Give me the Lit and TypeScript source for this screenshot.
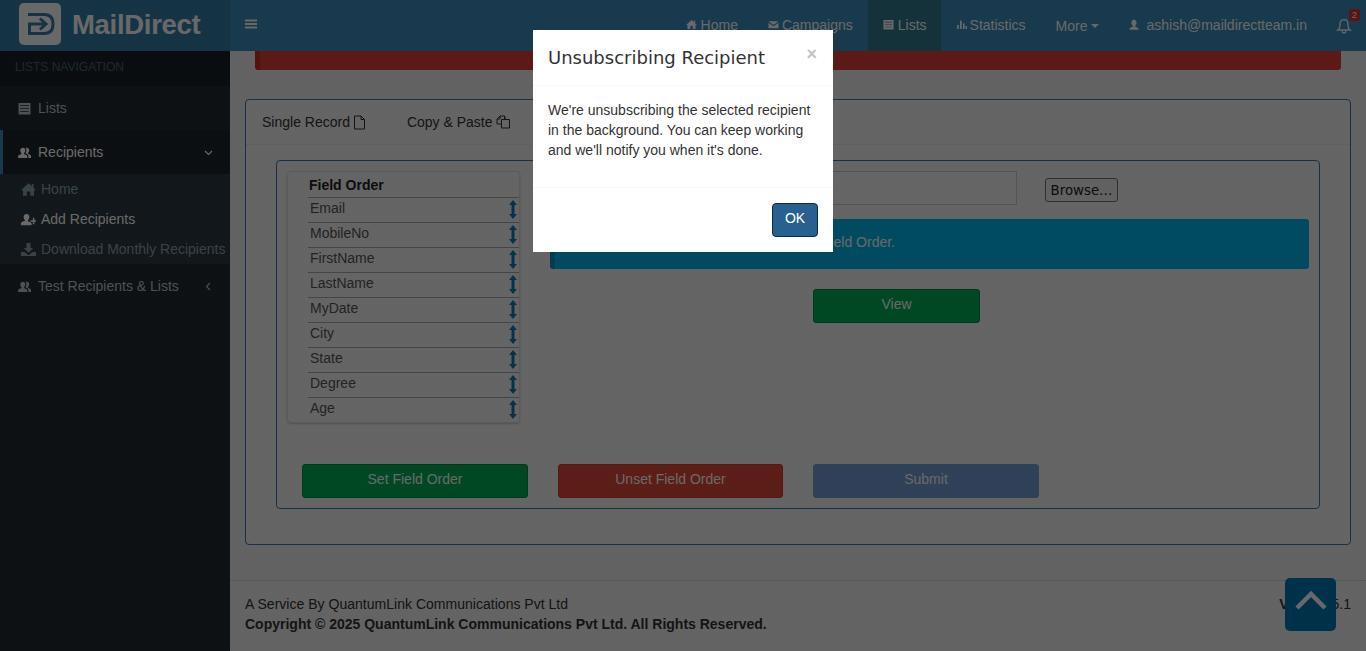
import { LitElement, html, css, svg } from "lit";
import { customElement } from "lit/decorators.js";

const gi = (d: any, size = 12) => html`<svg class="gi" width=${size} height=${size} viewBox="0 0 12 12" fill="currentColor">${d}</svg>`;
const I = {
  home: svg`<path d="M6 1 0 6.500h1.600V11h3V7.500h2.800V11h3V6.500H12L10 4.600V1.600H8.600v1.700z"/>`,
  list: svg`<path fill-rule="evenodd" d="M.5 1h11v10.500H.5zM2 3v.7h8V3zm0 2.700v.7h8V5.700zm0 2.700v.7h8V8.400z"/>`,
  mail: svg`<path d="M.5 2.500h11L6 6.500zM.5 4v6h11V4L6 8z"/>`,
  stats: svg`<path d="M1 6.500h2V11H1zM4.300 2h2v9h-2zM7.600 5h1.800v6H7.600zM10.300 7.500H12V11h-1.700z"/>`,
  user: svg`<path d="M6 .8c1.700 0 2.600 1.200 2.600 2.900 0 1.300-.6 2.500-1.400 3v1.100c1.600.5 3.300 1 3.300 2.200v.8h-9v-.8c0-1.200 1.700-1.700 3.300-2.200V6.700c-.8-.5-1.400-1.700-1.400-3C3.400 2 4.300.8 6 .8z"/>`,
  users: svg`<path d="M4.500 1.500c1.400 0 2.300 1 2.300 2.500 0 1.100-.5 2.100-1.200 2.500v1c1.400.4 3 .9 3 1.900V11H.1V9.400c0-1 1.600-1.500 3-1.900v-1C2.500 6.100 2.100 5.100 2.100 4c0-1.500 1-2.500 2.400-2.500zM8.200 1.500c1.300 0 2.100 1 2.100 2.400 0 1-.4 2-1 2.400v1.100c1.200.4 2.700.8 2.700 1.800V11H9.600V9.200c0-1.200-1.300-1.900-2.800-2.400.5-.7 1-1.600 1-3 0-.9-.3-1.600-.7-2.100.3-.1.700-.2 1.100-.2z"/>`,
  userAdd: svg`<path d="M4.400 1.500c1.400 0 2.300 1 2.300 2.500 0 1-.5 2-1.200 2.500v.9c1.500.4 3 .9 3 1.900v1.200H0V8.800c0-1 1.600-1.500 3.200-1.900V6.500C2.500 6 2.100 5 2.100 4c0-1.500.9-2.500 2.300-2.500zM9.500 4.500h1.200v2H12.600v1.200h-1.900v2H9.500v-2H7.600V6.500h1.900z"/>`,
  down: svg`<path d="M4.400.8h3.200v4h2.200L6 8.600 2.200 4.800h2.200zM0 8h2.800L6 10.600 9.200 8H12v3.200H0z"/>`,
  bell: svg`<path fill="none" stroke="currentColor" d="M6 1.200c2 0 3 1.500 3 3.400 0 2.200.4 3.600 1.600 4.400H1.400C2.600 8.200 3 6.800 3 4.600 3 2.700 4 1.200 6 1.200zM4.500 9.800c.2 1 .8 1.500 1.500 1.500s1.300-.5 1.500-1.500"/>`,
};

const fields = ["Email", "MobileNo", "FirstName", "LastName", "MyDate", "City", "State", "Degree", "Age"];

@customElement("app-root")
export class AppRoot extends LitElement {
  static styles = css`
    :host { display: block; width: 1366px; height: 651px; overflow: hidden; position: relative; font: 14px/20px "Liberation Sans", Arial, sans-serif; color: #333; background: #f0f0f0; }
    * { box-sizing: border-box; }
    .gi { display: inline-block; flex: none; }
    .top { display: flex; height: 51px; background: #3c8dbc; }
    .logo { width: 230px; background: #367fa9; display: flex; align-items: flex-start; padding: 3px 0 0 19px; gap: 11px; }
    .logo svg { flex: none; }
    .logo span { font: bold 27.5px/44px "Liberation Sans", sans-serif; color: #fff; letter-spacing: -0.3px; }
    .bars { margin: 18px 0 0 15px; width: 12px; height: 12px; color: #fff; }
    .nav { margin-left: auto; display: flex; height: 51px; color: #fff; }
    .nav a { display: flex; align-items: center; gap: 4px; height: 51px; padding: 0 15px 2px; }
    .nav a.camp { gap: 3px; }
    .nav a.on { background: #337a90; padding-right: 14px; }
    .nav a.stat { gap: 3px; }
    .nav a.more { padding: 0 15px 0; gap: 0; }
    .nav .gi { width: 11px; height: 11px; }
    .caret { display: inline-block; border: 4px solid transparent; border-top-color: #fff; border-bottom: 0; margin-left: 3px; }
    .nav a.mail { gap: 7px; padding: 0 15px 2px 14px; }
    .nav a.mail .gi { width: 12px; height: 12px; }
    .nav a.bell { position: relative; padding: 0 14px 0 14px; }
    .nav a.bell .gi { width: 16px; height: 16px; }
    .badge { position: absolute; right: 6px; top: 9px; background: #d9332b; color: #fff; font-size: 9px; line-height: 12px; height: 12px; padding: 0 3px; border-radius: 3px; }
    .rest { display: flex; height: 600px; }
    .side { width: 230px; flex: none; background: #222d32; color: #b8c7ce; }
    .shead { height: 35px; background: #1a2226; font-size: 12px; line-height: 32px; color: #4b646f; padding-left: 15px; }
    .item { height: 44px; display: flex; align-items: center; padding: 0 15px 0 18px; gap: 7px; }
    .item.on { background: #1e282c; color: #fff; border-left: 3px solid #3c8dbc; padding-left: 15px; }
    .item .chev { margin-left: auto; margin-right: 2px; }
    .item .gi { width: 13px; height: 13px; }
    .sub { background: #2c3b41; height: 90px; color: #8aa4af; }
    .sub div { height: 30px; display: flex; align-items: center; padding-left: 21px; gap: 5px; white-space: nowrap; }
    .sub div.on { color: #fff; }
    .sub .gi { width: 15px; height: 15px; }
    .main { flex: 1; display: flex; flex-direction: column; min-width: 0; }
    .redbar { height: 19px; margin: 0 25px; background: #e1423a; border-left: 5px solid #c23321; border-radius: 0 0 3px 3px; }
    .panel { margin: 29px 15px 0; height: 446px; border: 1px solid #337ab7; border-radius: 4px; background: #f5f5f5; }
    .tabs { height: 45px; border-bottom: 1px dotted #ddd; display: flex; align-items: flex-start; padding: 12px 0 0 16px; gap: 41px; }
    .tabs span { display: flex; align-items: center; gap: 3px; }
    .inner { margin: 15px 30px 0; height: 349px; border: 1px solid #337ab7; border-radius: 4px; padding: 10px 10px 0; }
    .cols { display: flex; height: 253px; }
    .fo { width: 233px; height: 252px; flex: none; border: 1px solid #ddd; border-radius: 4px; box-shadow: 0 1px 2px rgba(0,0,0,.2); padding-left: 20px; }
    .fo .h { height: 25px; font-weight: bold; padding: 3px 0 0 1px; color: #222; }
    .fo .r { height: 25px; border-top: 1px solid #aaa; display: flex; justify-content: space-between; padding: 0 2px; color: #555; }
    .fo .r svg { margin-top: 2px; color: #1a78b5; }
    .right { flex: 1; padding-left: 28px; }
    .filerow { display: flex; align-items: flex-start; height: 48px; }
    .file { width: 469px; height: 34px; border: 1px solid #ccc; background: #f7f7f7; flex: none; }
    .browse { margin: 7px 0 0 28px; width: 73px; height: 24px; border: 1px solid #767676; border-radius: 3px; background: #efefef; color: #222; font: 13.33px/23px "DejaVu Sans", sans-serif; text-align: center; }
    .alert { margin-left: 2px; width: 759px; height: 50px; background: #00b8ec; border-left: 5px solid #0097c4; border-radius: 3px; text-align: right; color: #fff; line-height: 46px; padding-right: 414px; white-space: nowrap; }
    .viewrow { display: flex; margin: 20px 0 0 265px; }
    .btn { height: 34px; border-radius: 3px; color: #fff; text-align: center; line-height: 29px; }
    .green { background: #00b05a; border: 1px solid #008d4c; }
    .red { background: #dd4b39; border: 1px solid #d73925; }
    .blue { background: #6f9bd8; border: 1px solid #6f9bd8; opacity: .95; }
    .btns { display: flex; margin: 40px 0 0 15px; }
    .btns .btn:nth-child(1) { width: 226px; }
    .btns .btn:nth-child(2) { width: 225px; margin-left: 30px; }
    .btns .btn:nth-child(3) { width: 226px; margin-left: 30px; }
    .foot { margin-top: 35px; height: 71px; border-top: 1px solid #d2d6de; background: #f2f2f2; padding: 13px 15px 0; display: flex; justify-content: space-between; }
    .foot .svc { letter-spacing: .02px; }
    .foot b { color: #333; }
    .ver b { letter-spacing: -.3px; }
    .backdrop { position: absolute; inset: 0; background-color: rgba(0,0,0,.58); background-image: conic-gradient(rgba(0,0,0,.05) 25%, transparent 0 50%, rgba(0,0,0,.05) 0 75%, transparent 0); background-size: 2px 2px; }
    .top-btn { position: absolute; left: 1285px; top: 578px; width: 51px; height: 53px; background: #007bb6; border-radius: 5px; display: flex; justify-content: center; padding-top: 11px; }
    .modal { position: absolute; left: 533px; top: 30px; width: 300px; height: 222px; background: #fff; display: flex; flex-direction: column; }
    .mh { height: 56px; padding: 15px 15px 0; border-bottom: 1px dotted #f2f2f2; position: relative; }
    .mh h4 { margin: 0; font: 18px/25px "DejaVu Sans", sans-serif; color: #333; white-space: nowrap; font-weight: normal; }
    .x { position: absolute; right: 16px; top: 14px; font: bold 18px/20px "Liberation Sans", sans-serif; color: #c4c4c4; }
    .mb { height: 102px; padding: 14px 15px; border-bottom: 1px dotted #f2f2f2; }
    .mf { display: flex; justify-content: flex-end; padding: 15px; }
    .ok { width: 46px; height: 34px; background: #286090; border: 1px solid #122b40; border-radius: 4px; color: #fff; text-align: center; line-height: 28px; }
  `;

  render() {
    const arrow = html`<svg width="8" height="19" viewBox="0 0 8 19" fill="currentColor"><path d="M4 0 8 5H5.500V14H8L4 19 0 14H2.500V5H0z"/></svg>`;
    const chevD = html`<svg class="chev" width="9" height="9" viewBox="0 0 9 9" fill="none" stroke="currentColor" stroke-width="1.100"><path d="M1 3 4.500 6.500 8 3"/></svg>`;
    const chevL = html`<svg class="chev" width="9" height="9" viewBox="0 0 9 9" fill="none" stroke="currentColor" stroke-width="1.100"><path d="M6 1 2.500 4.500 6 8"/></svg>`;
    return html`
      <div class="top">
        <div class="logo">
          <svg width="42" height="42" viewBox="0 0 42 42">
            <rect width="42" height="42" rx="5" fill="#fff"/>
            <path d="M9 11.500H25Q34 11.500 34 21Q34 30.500 25 30.500H10.500V21H27M21 15.500 27 21 21 26.500" fill="none" stroke="#367fa9" stroke-width="3"/>
          </svg>
          <span>MailDirect</span>
        </div>
        <svg class="bars" viewBox="0 0 12 12" fill="currentColor"><path d="M0 1.500h12v2H0zM0 5h12v2H0zM0 8.500h12v2H0z"/></svg>
        <div class="nav">
          <a>${gi(I.home)}Home</a>
          <a class="camp">${gi(I.mail)}Campaigns</a>
          <a class="on">${gi(I.list)}Lists</a>
          <a class="stat">${gi(I.stats)}Statistics</a>
          <a class="more">More<i class="caret"></i></a>
          <a class="mail">${gi(I.user)}ashish@maildirectteam.in</a>
          <a class="bell">${gi(I.bell)}<span class="badge">2</span></a>
        </div>
      </div>
      <div class="rest">
        <aside class="side">
          <div class="shead">LISTS NAVIGATION</div>
          <div class="item">${gi(I.list)}<span>Lists</span></div>
          <div class="item on">${gi(I.users)}<span>Recipients</span>${chevD}</div>
          <div class="sub">
            <div>${gi(I.home)}Home</div>
            <div class="on">${gi(I.userAdd)}Add Recipients</div>
            <div>${gi(I.down)}Download Monthly Recipients</div>
          </div>
          <div class="item">${gi(I.users)}<span>Test Recipients &amp; Lists</span>${chevL}</div>
        </aside>
        <main class="main">
          <div class="redbar"></div>
          <section class="panel">
            <div class="tabs">
              <span>Single Record <svg width="13" height="15" viewBox="0 0 13 15" fill="none" stroke="currentColor"><path d="M1.500 1H8L11.500 4.500V14H1.500ZM8 1V4.500H11.500"/></svg></span>
              <span>Copy &amp; Paste <svg width="15" height="14" viewBox="0 0 15 14" fill="none" stroke="currentColor"><path d="M5.500 4.500H13.500V13H5.500ZM5.500 9H1V4L4 1H8.500V4.500M4 1V4H1M9 4.500V1.500"/></svg></span>
            </div>
            <div class="inner">
              <div class="cols">
                <div class="fo">
                  <div class="h">Field Order</div>
                  ${fields.map((f) => html`<div class="r"><span>${f}</span>${arrow}</div>`)}
                </div>
                <div class="right">
                  <div class="filerow"><div class="file"></div><div class="browse">Browse…</div></div>
                  <div class="alert">Please set the Field Order.</div>
                  <div class="viewrow"><div class="btn green" style="width:167px">View</div></div>
                </div>
              </div>
              <div class="btns">
                <div class="btn green">Set Field Order</div>
                <div class="btn red">Unset Field Order</div>
                <div class="btn blue">Submit</div>
              </div>
            </div>
          </section>
          <footer class="foot">
            <div><span class="svc">A Service By QuantumLink Communications Pvt Ltd</span><br><b>Copyright © 2025 QuantumLink Communications Pvt Ltd. All Rights Reserved.</b></div>
            <div class="ver"><b>Version</b> 5.1</div>
          </footer>
        </main>
      </div>
      <div class="top-btn"><svg width="34" height="22" viewBox="0 0 34 22" fill="none" stroke="#fff" stroke-width="4.500"><path d="M3 19 17 5 31 19"/></svg></div>
      <div class="backdrop"></div>
      <div class="modal">
        <div class="mh"><h4>Unsubscribing Recipient</h4><span class="x">×</span></div>
        <div class="mb">We're unsubscribing the selected recipient in the background. You can keep working and we'll notify you when it's done.</div>
        <div class="mf"><div class="ok">OK</div></div>
      </div>
    `;
  }
}
